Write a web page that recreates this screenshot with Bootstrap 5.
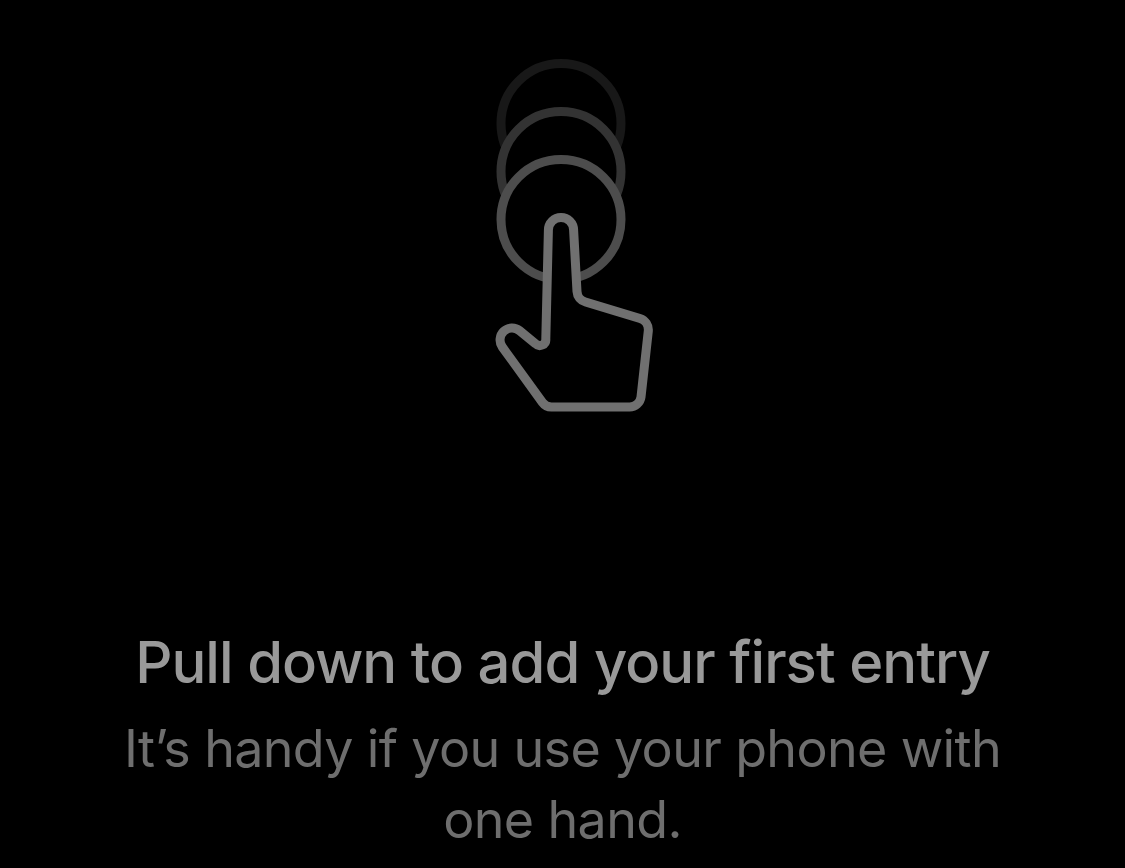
<!DOCTYPE html>
<html lang="en"><head><meta charset="utf-8"><title>Journal</title>
<meta name="viewport" content="width=device-width, initial-scale=1">
<link href="https://cdn.jsdelivr.net/npm/bootstrap@5.3.0/dist/css/bootstrap.min.css" rel="stylesheet">
<style>
body{background:#000;font-family:Inter,"Liberation Sans",sans-serif}
.empty-state{height:868px;padding-top:50px}
.gesture{width:180px;height:370px;margin-left:23px}
.headline{margin-top:204px;font-size:58px;line-height:76px;font-weight:500;color:#999;letter-spacing:-.95px}
.hint{font-size:52px;line-height:71.5px;color:#6e6e6e;letter-spacing:-.65px;margin-top:12.5px}
</style></head>
<body>
<main class="empty-state d-flex flex-column align-items-center text-center overflow-hidden">
<svg class="gesture flex-shrink-0" viewBox="484 50 180 370" fill="#000" stroke-width="9" stroke-linejoin="round" aria-hidden="true">
<circle cx="561" cy="123.500" r="60" stroke="#181818"/>
<circle cx="561" cy="171.500" r="60" stroke="#333"/>
<circle cx="561" cy="219.500" r="60" stroke="#4d4d4d"/>
<path stroke="#707070" d="M548.400 230A12.600 12.600 0 0 1 573.600 230L577 291.500A11.500 11.500 0 0 0 585.500 302L640 318.500A12 12 0 0 1 648.300 331L641 397A11.500 11.500 0 0 1 629.500 407H551.500A11 11 0 0 1 542.500 402.500L502.300 347A12 12 0 0 1 519.500 330.600L535.500 343.700A6 6 0 0 0 545.800 339Z"/>
</svg>
<h1 class="headline text-nowrap mb-0">Pull down to add your first entry</h1>
<p class="hint text-nowrap mb-0">It’s handy if you use your phone with<br>one hand.</p>
</main>
<script src="https://cdn.jsdelivr.net/npm/bootstrap@5.3.0/dist/js/bootstrap.bundle.min.js"></script>
</body></html>
